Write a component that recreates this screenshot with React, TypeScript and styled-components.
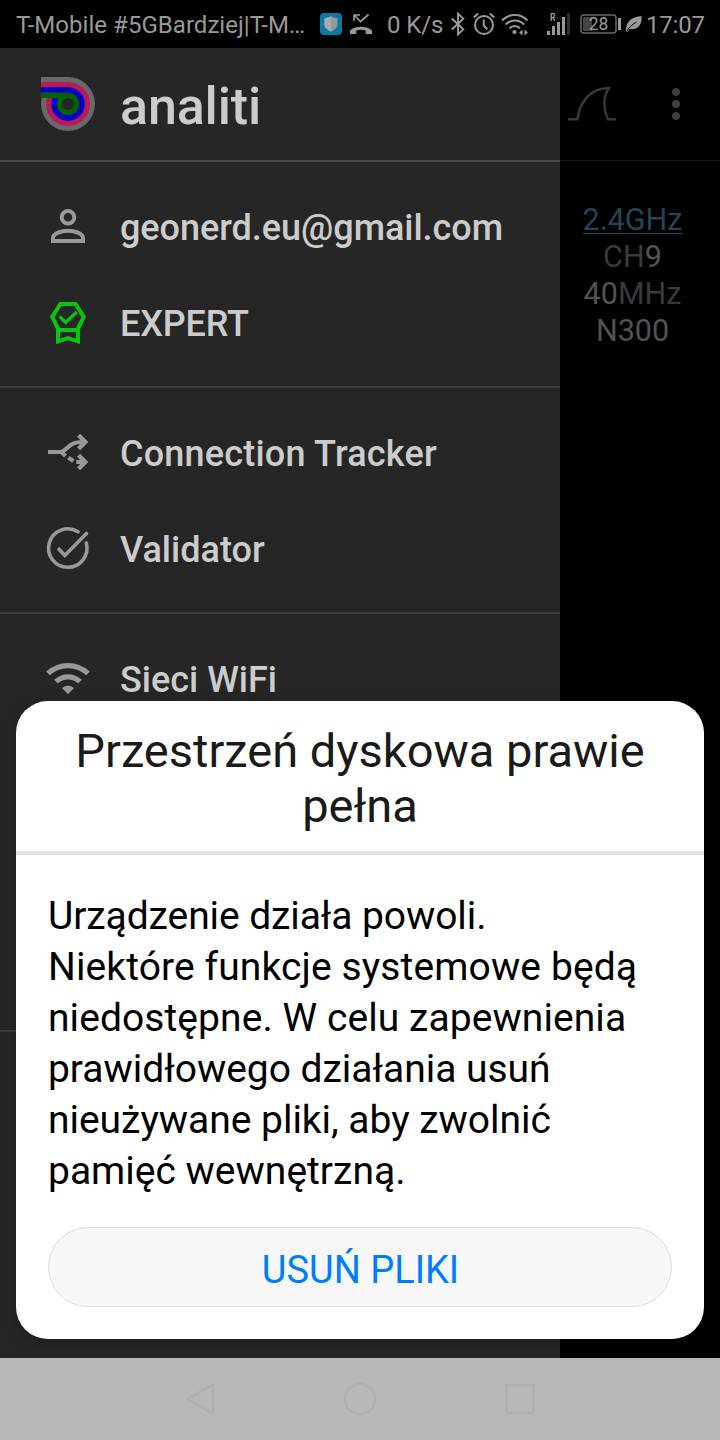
import React from "react";
import styled, { createGlobalStyle } from "styled-components";

const GlobalStyle = createGlobalStyle`
  * { box-sizing: border-box; }
  body { margin: 0; background: #000; font-family: Roboto, "Noto Sans", sans-serif; }
  svg { display: block; flex: none; }
`;

const Screen = styled.div`
  position: relative;
  display: grid;
  grid-template-rows: 48px 1310px 82px;
  width: 720px;
  height: 1440px;
  overflow: hidden;
  background: #000;
`;

const StatusBar = styled.header`
  display: flex;
  align-items: center;
  padding: 0 0 0 16px;
  color: #999;
  white-space: nowrap;
`;

const StatusText = styled.span<{ $width: number; $gap?: number; $track?: number }>`
  width: ${(p) => p.$width}px;
  margin-left: ${(p) => p.$gap ?? 0}px;
  font-size: 24px;
  letter-spacing: ${(p) => p.$track ?? 0}px;
  line-height: 48px;
  padding-top: 1px;
`;

const StatusIcon = styled.svg<{ $gap: number }>`
  margin-left: ${(p) => p.$gap}px;
`;

const Body = styled.main`
  display: grid;
  grid-template-columns: 560px 160px;
`;

const Drawer = styled.nav`
  background: #262626;
  display: flex;
  flex-direction: column;
`;

const Brand = styled.div`
  display: flex;
  align-items: center;
  height: 114px;
  padding: 0 41px;
  gap: 25px;
  border-bottom: 2px solid #484848;
`;

const BrandName = styled.h1`
  margin: 4px 0 0;
  font-size: 52px;
  font-weight: 500;
  letter-spacing: -0.15px;
  color: #ccc;
`;

const Group = styled.ul<{ $height?: number }>`
  list-style: none;
  margin: 0;
  padding: 16px 0;
  height: ${(p) => p.$height ?? 226}px;
  border-bottom: 2px solid #3c3c3c;
`;

const Item = styled.li`
  display: flex;
  align-items: center;
  gap: 28px;
  height: 96px;
  padding-left: 44px;
  color: #999;
`;

const Label = styled.span<{ $track?: number }>`
  padding-top: 3px;
  font-size: 36px;
  font-weight: 500;
  letter-spacing: ${(p) => p.$track ?? 0}px;
  color: #ccc;
  white-space: nowrap;
`;

const Side = styled.section`
  background: #000;
`;

const Toolbar = styled.div`
  display: flex;
  align-items: center;
  height: 113px;
  padding-left: 8px;
  gap: 56px;
  border-bottom: 1px solid #181818;
`;

const RadioInfo = styled.div`
  display: flex;
  flex-direction: column;
  align-items: center;
  padding: 40px 15px 0 0;
  font-size: 30.5px;
  line-height: 37px;
  color: #3a3a3a;
`;

const Band = styled.span`
  color: #234555;
  text-decoration: underline;
  text-decoration-thickness: 1px;
  text-underline-offset: 3px;
`;

const Value = styled.span`
  color: #525252;
`;

const NavBar = styled.footer`
  display: flex;
  align-items: center;
  justify-content: center;
  gap: 112px;
  background: #b8b8b8;
`;

const Dialog = styled.section`
  position: absolute;
  left: 16px;
  right: 16px;
  bottom: 101px;
  height: 638px;
  border-radius: 32px;
  background: #fff;
  box-shadow: 0 4px 16px rgba(0, 0, 0, 0.2);
`;

const DialogTitle = styled.h2`
  margin: 0;
  height: 154px;
  padding: 22px 40px 0;
  border-bottom: 4px solid #e3e3e3;
  font-size: 47px;
  font-weight: 400;
  line-height: 55px;
  text-align: center;
  color: #1a1a1a;
  white-space: nowrap;
`;

const DialogText = styled.p`
  margin: 0;
  padding: 36px 32px 0;
  font-size: 39px;
  line-height: 51px;
  color: #000;
  white-space: nowrap;
`;

const Line = styled.span<{ $track?: number }>`
  display: block;
  letter-spacing: ${(p) => p.$track ?? 0}px;
`;

const ActionButton = styled.button`
  display: block;
  width: 624px;
  height: 80px;
  margin: 30px 32px 0;
  padding: 6px 0 0 1px;
  border: 1px solid #dcdcdc;
  border-radius: 40px;
  background: #f7f7f7;
  font: 400 38px Roboto, sans-serif;
  color: #007dff;
`;

const Logo = () => (
  <svg width="54" height="54" viewBox="0 0 54 54">
    <circle cx="27" cy="27" r="27" fill="#686868" />
    <circle cx="27" cy="27" r="22" fill="#b81c58" />
    <circle cx="27" cy="27" r="16.7" fill="#0000c8" />
    <circle cx="27" cy="27" r="11.3" fill="#006400" />
    <path d="M0 0h27v5H0z" fill="#686868" />
    <path d="M0 5h27v5.3H0z" fill="#b81c58" />
    <path d="M0 10.3h27v5.4H0z" fill="#0000c8" />
    <path d="M0 15.7h27V21H0z" fill="#006400" />
    <circle cx="27" cy="27" r="6" fill="#262626" />
  </svg>
);

const ItemIcon = ({ children }: { children: React.ReactNode }) => (
  <svg width="48" height="48" viewBox="0 0 48 48" fill="none" stroke="currentColor" strokeWidth="4">
    {children}
  </svg>
);

const PersonIcon = () => (
  <ItemIcon>
    <circle cx="24" cy="15.3" r="6.3" />
    <path d="M9 39v-3c0-4.600 8.500-7.300 15-7.300s15 2.700 15 7.300v3z" />
  </ItemIcon>
);

const BadgeIcon = () => (
  <ItemIcon>
    <g stroke="#06c80a">
      <path d="M14.500 31.500 8.200 18.800 16.400 6h15.200l8.200 12.800-6.300 12.700M14 32h20v11.300L24 40l-10 3.300z" />
      <path d="m15.500 18.500 6.200 6 11-10.500" strokeWidth="3.300" />
    </g>
  </ItemIcon>
);

const SplitIcon = () => (
  <ItemIcon>
    <path d="M4 24h12c6.500 0 8.500-9.700 19-9.700h5" />
    <path d="m34.600 7.300 6.700 6.700-6.700 6.700M34.600 27.300l6.700 6.700-6.700 6.700" strokeWidth="4.300" />
    <path d="M32.300 34H40M24.300 29.700l5 3.300M17.500 24l4 4" />
  </ItemIcon>
);

const CheckIcon = () => (
  <ItemIcon>
    <g strokeWidth="3.600" strokeLinecap="round">
      <path d="M34 7.800A19.200 19.200 0 1 0 42.300 19" />
      <path d="m15 25.200 5.800 6.200L42.500 9.500" strokeLinejoin="miter" />
    </g>
  </ItemIcon>
);

const WifiIcon = () => (
  <ItemIcon>
    <path d="M4 19.400a29.500 29.500 0 0 1 40 0" strokeWidth="5.200" />
    <path d="M12 27.700a17.200 17.200 0 0 1 24 0" strokeWidth="5.200" />
    <path d="M18 34q6-5 12 0l-6 6.300z" fill="currentColor" stroke="none" />
  </ItemIcon>
);

export default function App() {
  return (
    <>
      <GlobalStyle />
      <Screen>
        <StatusBar>
          <StatusText $width={304} $track={0.04}>T-Mobile #5GBardziej|T-M…</StatusText>
          <StatusIcon $gap={0} width="22" height="22" viewBox="0 0 22 22">
            <rect width="22" height="22" rx="4" fill="#087ba5" />
            <path d="m11 3.500 6.500 2v6c0 3-3 5.500-6.500 7-3.500-1.500-6.500-4-6.500-7v-6z" fill="#999" />
            <path d="M11 3.500v15c-3.500-1.500-6.500-4-6.500-7v-6z" fill="#aaa" />
          </StatusIcon>
          <StatusIcon $gap={8} width="22" height="22" viewBox="0 0 22 22" fill="none" stroke="currentColor">
            <path d="M4 8V2h6M4.500 2.500l6 6L18.500 1.500" strokeWidth="1.700" />
            <path d="M0 21v-3.500c5-5 17-5 22 0V21h-6.300v-3.500c-3-1-6.400-1-9.400 0V21z" fill="currentColor" stroke="none" />
          </StatusIcon>
          <StatusText $gap={15} $width={64} $track={-0.1}>0 K/s</StatusText>
          <StatusIcon $gap={0} width="14" height="24" viewBox="0 0 14 24" fill="none" stroke="currentColor" strokeWidth="1.900">
            <path d="m.8 6.500 11.500 10.800L7 22.500v-21l5.300 5.200L.8 17.500" />
          </StatusIcon>
          <StatusIcon $gap={8} width="22" height="24" viewBox="0 0 22 24" fill="none" stroke="currentColor" strokeWidth="2">
            <circle cx="11" cy="13" r="9" />
            <path d="M10.800 7.500v6l3.500 3.700M.8 5.500 5 1.500M17 1.500l4.200 4" />
          </StatusIcon>
          <StatusIcon $gap={6} width="28" height="24" viewBox="0 0 28 24" fill="none" stroke="currentColor" strokeWidth="2.100">
            <path d="M1 8.500c7-7.300 18.500-7.300 25.500 0M4.700 12.500c5.300-5.300 13-5.300 18.300 0M8.500 16.300c3-3 7.500-3 10.500 0" />
            <circle cx="13.500" cy="20" r="2.100" fill="currentColor" stroke="none" />
            <path d="M21.500 17.500v6l-3.500-3zM23.500 17.500v6l3.500-3z" fill="currentColor" stroke="none" />
          </StatusIcon>
          <StatusIcon $gap={18} width="24" height="26" viewBox="0 0 24 26" fill="#999">
            <path d="M0 20h3v4H0zM5 15h3v9H5zM10 11h3v13h-3zM15 6h3v18h-3z" />
            <path d="M20 2h3v22h-3z" fill="#303030" />
            <text x="3" y="9.500" fontSize="10.500" fontWeight="700" textLength="5.500" lengthAdjust="spacingAndGlyphs">R</text>
          </StatusIcon>
          <StatusIcon $gap={9} width="41" height="20" viewBox="0 0 41 20">
            <rect x="1" y="1" width="35" height="18" rx="3" fill="none" stroke="#656565" strokeWidth="1.600" />
            <path d="M3 3h9v14H3z" fill="#444" />
            <path d="M38 4h3v12h-3z" fill="#999" />
            <text x="18.500" y="16" fontSize="17.500" textAnchor="middle" fill="#999">28</text>
          </StatusIcon>
          <StatusIcon $gap={5} width="16" height="18" viewBox="0 0 16 18">
            <path d="M0 16C0 8 3 2.500 15.500 1c1 8-3.500 14.500-12 13L1.500 17z" fill="#999" />
            <path d="M1 16.500C3 12 6 9.500 10.500 7" stroke="#000" strokeWidth="1" fill="none" />
          </StatusIcon>
          <StatusText $gap={4} $width={70} $track={-0.2}>17:07</StatusText>
        </StatusBar>

        <Body>
          <Drawer>
            <Brand>
              <Logo />
              <BrandName>analiti</BrandName>
            </Brand>
            <Group>
              <Item><PersonIcon /><Label $track={-0.04}>geonerd.eu@gmail.com</Label></Item>
              <Item><BadgeIcon /><Label $track={-0.15}>EXPERT</Label></Item>
            </Group>
            <Group>
              <Item><SplitIcon /><Label $track={0.2}>Connection Tracker</Label></Item>
              <Item><CheckIcon /><Label>Validator</Label></Item>
            </Group>
            <Group $height={418}>
              <Item><WifiIcon /><Label>Sieci WiFi</Label></Item>
            </Group>
          </Drawer>
          <Side>
            <Toolbar>
              <svg width="48" height="36" viewBox="0 0 48 36" fill="none" stroke="#383838" strokeWidth="2.500">
                <path d="M0 33.300h9.300C11.500 18 21 2 41 2c-6 9-6 20-1 31.300h8" />
              </svg>
              <svg width="8" height="32" viewBox="0 0 8 32" fill="#3e3e3e">
                <circle cx="4" cy="4" r="4" />
                <circle cx="4" cy="16" r="4" />
                <circle cx="4" cy="28" r="4" />
              </svg>
            </Toolbar>
            <RadioInfo>
              <Band>2.4GHz</Band>
              <span>CH<Value>9</Value></span>
              <span><Value>40</Value>MHz</span>
              <Value>N300</Value>
            </RadioInfo>
          </Side>
        </Body>

        <NavBar>
          <svg width="48" height="48" viewBox="0 0 48 48" fill="none" stroke="#b0b0b0" strokeWidth="2.600" strokeLinejoin="round">
            <path d="M37 9.500v29L11.500 24z" />
          </svg>
          <svg width="48" height="48" viewBox="0 0 48 48" fill="none" stroke="#b0b0b0" strokeWidth="2.600">
            <circle cx="24" cy="24" r="15" />
          </svg>
          <svg width="48" height="48" viewBox="0 0 48 48" fill="none" stroke="#b0b0b0" strokeWidth="2.600">
            <rect x="10.300" y="10.300" width="27.400" height="27.400" rx="1" />
          </svg>
        </NavBar>

        <Dialog role="dialog">
          <DialogTitle>Przestrzeń dyskowa prawie<br />pełna</DialogTitle>
          <DialogText>
            <Line $track={-0.09}>Urządzenie działa powoli.</Line>
            <Line $track={0.11}>Niektóre funkcje systemowe będą</Line>
            <Line $track={0.07}>niedostępne. W celu zapewnienia</Line>
            <Line $track={-0.03}>prawidłowego działania usuń</Line>
            <Line $track={-0.03}>nieużywane pliki, aby zwolnić</Line>
            <Line>pamięć wewnętrzną.</Line>
          </DialogText>
          <ActionButton>USUŃ PLIKI</ActionButton>
        </Dialog>
      </Screen>
    </>
  );
}
